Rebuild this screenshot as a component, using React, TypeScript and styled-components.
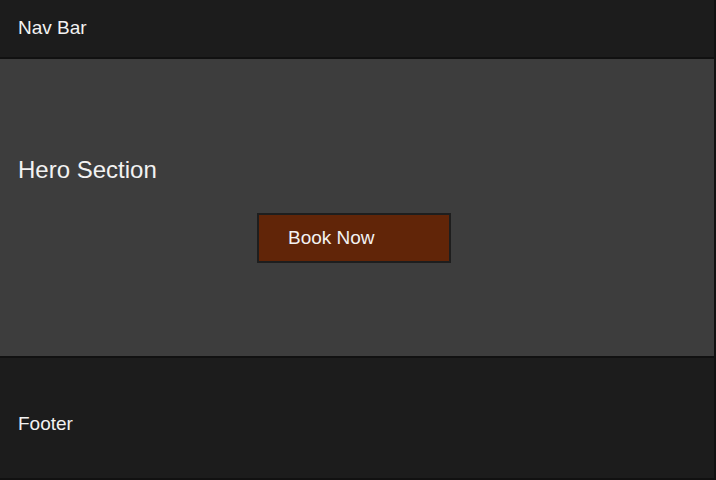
import React from "react";
import styled, { createGlobalStyle } from "styled-components";

const Global = createGlobalStyle`
  html, body { margin: 0; padding: 0; background: #111; }
  body { font-family: "Liberation Sans", Arial, sans-serif; color: #f2f2f2; }
`;

const Page = styled.div`
  display: flex;
  flex-direction: column;
  width: 716px;
  height: 480px;
`;

const Section = styled.section<{ $bg: string; $h: number; $shift?: number }>`
  box-sizing: border-box;
  height: ${(p) => p.$h}px;
  background: ${(p) => p.$bg};
  border-right: 2px solid #111;
  border-bottom: 2px solid #111;
  display: flex;
  flex-direction: column;
  justify-content: center;
  padding: ${(p) => Math.max(p.$shift ?? 0, 0)}px 18px ${(p) => Math.max(-(p.$shift ?? 0), 0)}px;
`;

const Label = styled.div<{ $size: number }>`
  font-size: ${(p) => p.$size}px;
  line-height: 1.15;
`;

const Button = styled.button`
  box-sizing: border-box;
  width: 194px;
  height: 50px;
  margin: 30px 0 0 239px;
  padding: 0 0 0 29px;
  text-align: left;
  background: #612508;
  border: 2px solid #1e1e1e;
  color: #f2f2f2;
  font-family: "Liberation Sans", Arial, sans-serif;
  font-size: 19px;
`;

export default function App() {
  return (
    <>
      <Global />
      <Page>
        <Section $bg="#1c1c1c" $h={59} $shift={-2}>
          <Label $size={19}>Nav Bar</Label>
        </Section>
        <Section $bg="#3d3d3d" $h={299} $shift={4}>
          <Label $size={24}>Hero Section</Label>
          <Button>Book Now</Button>
        </Section>
        <Section $bg="#1c1c1c" $h={122} $shift={12}>
          <Label $size={19}>Footer</Label>
        </Section>
      </Page>
    </>
  );
}
